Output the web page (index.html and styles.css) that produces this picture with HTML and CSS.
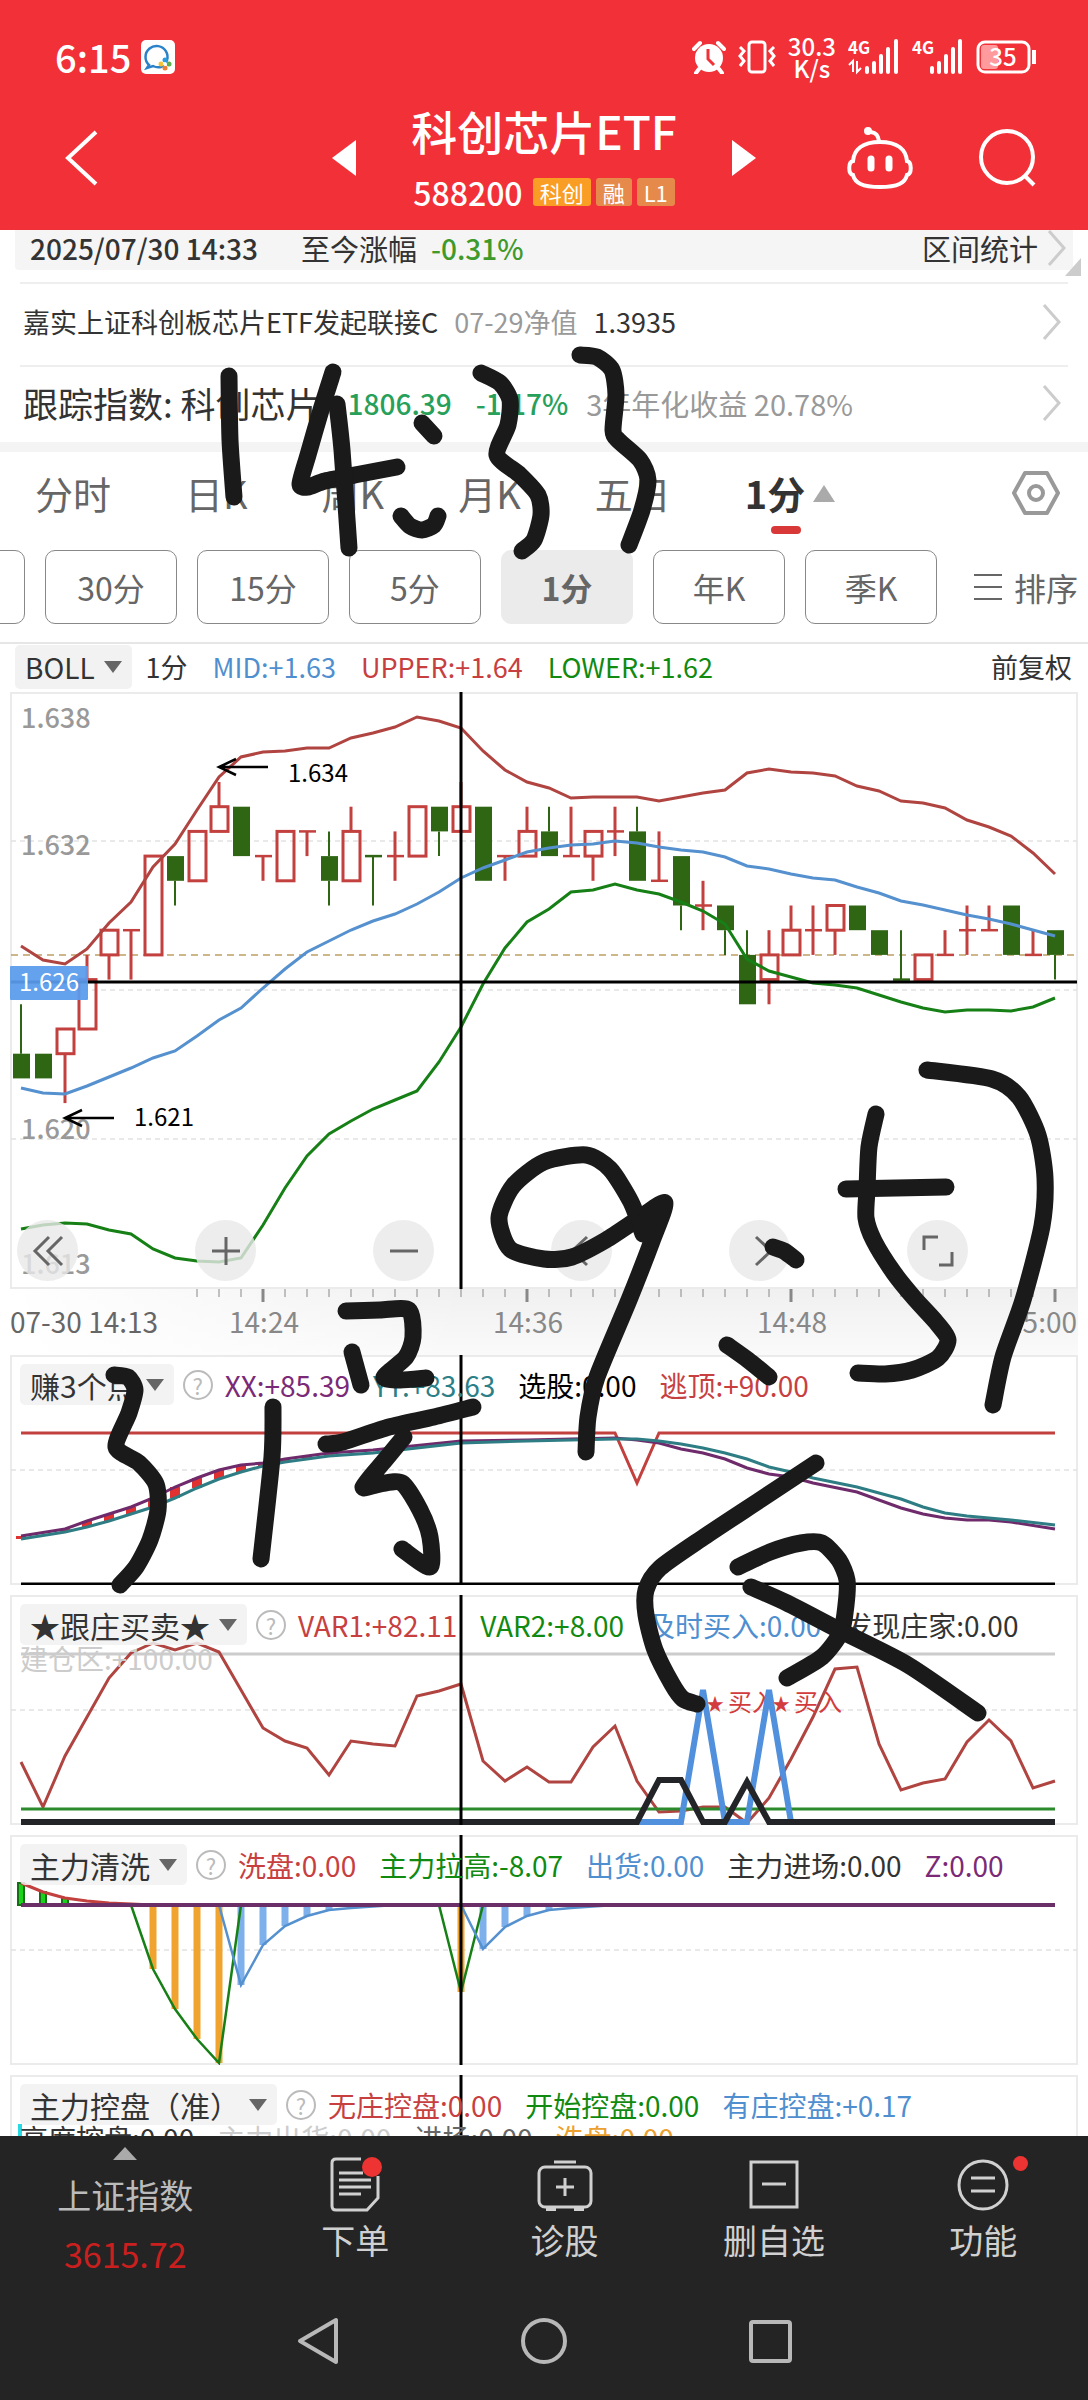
FILE: index.html
```html
<!DOCTYPE html>
<html lang="zh-CN">
<head>
<meta charset="utf-8">
<meta name="viewport" content="width=device-width, initial-scale=1">
<title>科创芯片ETF 588200</title>
<link rel="stylesheet" href="styles.css">
</head>
<body>
<div class="page">

<header class="top">
  <div class="status">
    <span class="clock">6:15</span>
    <svg class="app-badge" width="34" height="34" viewBox="0 0 34 34"><rect width="34" height="34" rx="5" fill="#fff"/><path d="M8 25a11 11 0 1 1 12 2c-4 1-6 0-8-1l-6 2z" fill="none" stroke="#2b82c9" stroke-width="2.5"/><circle cx="24" cy="20" r="2.5" fill="#2b9be0"/><circle cx="20" cy="24" r="2.5" fill="#f5c33b"/><circle cx="28" cy="24" r="2.5" fill="#59b04c"/><circle cx="24" cy="28" r="2.5" fill="#ef7f35"/><circle cx="24" cy="24" r="2" fill="#fff"/></svg>
    <div class="status-right">
      <svg width="34" height="34" viewBox="0 0 34 34"><circle cx="17" cy="18" r="14" fill="#fff"/><path d="M16 9v10l6 6" fill="none" stroke="#f23037" stroke-width="3"/><path d="M2 9l6-6M32 9l-6-6M7 29l-3 4M27 29l3 4" stroke="#fff" stroke-width="4" stroke-linecap="round"/></svg>
      <svg width="38" height="34" viewBox="0 0 38 34"><rect x="11" y="2" width="16" height="30" rx="3" fill="none" stroke="#fff" stroke-width="3"/><path d="M2 7l4 4-4 5 4 5-4 5M36 7l-4 4 4 5-4 5 4 5" fill="none" stroke="#fff" stroke-width="3"/></svg>
      <span class="speed">30.3<br>K/s</span>
      <svg width="52" height="36" viewBox="0 0 52 36"><text class="net" x="0" y="15">4G</text><path d="M5 33V22l-4 4M9 22v11l4-4" fill="none" stroke="#fff" stroke-width="2"/><path d="M19 33v-4M26 33v-9M33 33V17M40 33V10M48 33V2" stroke="#fff" stroke-width="4" stroke-linecap="round"/></svg>
      <svg width="52" height="36" viewBox="0 0 52 36"><text class="net" x="0" y="15">4G</text><path d="M20 33v-4M27 33v-9M34 33V17M41 33V10M48 33V2" stroke="#fff" stroke-width="4" stroke-linecap="round"/></svg>
      <svg width="62" height="34" viewBox="0 0 62 34"><rect x="5" y="5" width="17" height="24" rx="3" fill="#ff9a9d"/><rect x="2" y="2" width="51" height="30" rx="7" fill="none" stroke="#fff" stroke-width="3"/><path d="M58 10v14" stroke="#fff" stroke-width="4"/><text x="27" y="26" class="battery">35</text></svg>
    </div>
  </div>
  <nav class="titlebar">
    <button class="icon-btn back" aria-label="返回"><svg width="34" height="56" viewBox="0 0 34 56"><path d="M32 2L4 28l28 26" fill="none" stroke="#fff" stroke-width="4"/></svg></button>
    <button class="icon-btn" aria-label="上一只"><svg width="24" height="36" viewBox="0 0 24 36"><path d="M24 0v36L0 18z" fill="#fff"/></svg></button>
    <div class="title">
      <h1>科创芯片ETF</h1>
      <div class="code"><span>588200</span><i class="tag hot">科创</i><i class="tag">融</i><i class="tag">L1</i></div>
    </div>
    <button class="icon-btn" aria-label="下一只"><svg width="24" height="36" viewBox="0 0 24 36"><path d="M0 0v36l24-18z" fill="#fff"/></svg></button>
    <div class="tools">
      <button class="icon-btn" aria-label="助手"><svg width="68" height="64" viewBox="0 0 68 64" fill="none" stroke="#fff" stroke-width="4"><path d="M34 16C16 16 8 24 7 35c-5 1-5 13 0 14 2 8 9 12 27 12s25-4 27-12c5-1 5-13 0-14C60 24 52 16 34 16z"/><path d="M33 15c-1-6-3-8-8-9" stroke-width="4"/><circle cx="22" cy="5" r="2"/><path d="M25 33v9M43 33v9" stroke-width="7" stroke-linecap="round"/></svg></button>
      <button class="icon-btn" aria-label="搜索"><svg width="60" height="60" viewBox="0 0 60 60" fill="none" stroke="#fff" stroke-width="4"><circle cx="29" cy="29" r="26"/><path d="M47 48l9 9"/></svg></button>
    </div>
  </nav>
</header>

<section class="info">
  <div class="range">
    <span class="num">2025/07/30 14:33</span><span class="range-label">至今涨幅</span><span class="num down">-0.31%</span>
    <a href="#range" class="range-link">区间统计<svg class="chev" width="20" height="36" viewBox="0 0 20 36"><path d="M2 1l15 17L2 35"/></svg></a>
  </div>
  <a href="#fund" class="info-row fund"><span>嘉实上证科创板芯片ETF发起联接C</span><span class="muted">07-29净值</span><span>1.3935</span><svg class="chev" width="20" height="36" viewBox="0 0 20 36"><path d="M2 1l15 17L2 35"/></svg></a>
  <a href="#index" class="info-row index"><span class="index-name">跟踪指数: 科创芯片</span><span class="green">1806.39</span><span class="green">-1.17%</span><span class="muted yield">3年年化收益 20.78%</span><svg class="chev" width="20" height="36" viewBox="0 0 20 36"><path d="M2 1l15 17L2 35"/></svg></a>
</section>

<nav class="tabs">
  <button>分时</button><button>日K</button><button>周K</button><button>月K</button><button>五日</button><button class="on">1分<i class="up"></i></button>
  <button class="gear" aria-label="设置"><svg width="48" height="44" viewBox="0 0 48 44" fill="none" stroke="#999" stroke-width="4"><path d="M13 2h22l11 20-11 20H13L2 22z" stroke-linejoin="round"/><circle cx="24" cy="22" r="7"/></svg></button>
</nav>

<div class="periods">
  <div class="period-list"><button>60分</button><button>30分</button><button>15分</button><button>5分</button><button class="on">1分</button><button>年K</button><button>季K</button></div>
  <button class="sort"><svg width="28" height="28" viewBox="0 0 28 28"><path d="M0 2h28M0 14h28M0 26h28" stroke="#666" stroke-width="2"/></svg>排序</button>
</div>

<main>
  <div class="boll">
    <button class="pick">BOLL<i class="caret"></i></button><span>1分</span><span class="blue">MID:+1.63</span><span class="red">UPPER:+1.64</span><span class="lime">LOWER:+1.62</span><span class="adjust">前复权</span>
  </div>

  <section class="panel">
    <svg id="kline" viewBox="0 690 1088 665"></svg>
    <div class="chart-tools">
      <button aria-label="最早"><svg width="34" height="34" viewBox="0 0 34 34"><path d="M18 3L4 17l14 14M31 3L17 17l14 14"/></svg></button>
      <button aria-label="放大"><svg width="34" height="34" viewBox="0 0 34 34"><path d="M3 17h28M17 3v28"/></svg></button>
      <button aria-label="缩小"><svg width="34" height="34" viewBox="0 0 34 34"><path d="M3 17h28"/></svg></button>
      <button aria-label="左移"><svg width="34" height="34" viewBox="0 0 34 34"><path d="M22 3L7 17l15 14"/></svg></button>
      <button aria-label="右移"><svg width="34" height="34" viewBox="0 0 34 34"><path d="M13 3l15 14-15 14"/></svg></button>
      <button aria-label="全屏"><svg width="34" height="34" viewBox="0 0 34 34"><path d="M3 16V3h14M31 18v13H18"/></svg></button>
    </div>
  </section>

  <section class="panel">
    <svg id="profit" viewBox="0 1355 1088 230"></svg>
    <div class="legend"><button class="pick">赚3个点<i class="caret"></i></button><button class="help" aria-label="说明">?</button><span class="purple">XX:+85.39</span><span class="teal">YY:+83.63</span><span class="black">选股:0.00</span><span class="red">逃顶:+90.00</span></div>
  </section>

  <section class="panel">
    <svg id="follow" viewBox="0 1595 1088 230"></svg>
    <div class="legend"><button class="pick">★跟庄买卖★<i class="caret"></i></button><button class="help" aria-label="说明">?</button><span class="red">VAR1:+82.11</span><span class="lime">VAR2:+8.00</span><span class="blue">及时买入:0.00</span><span>发现庄家:0.00</span><span class="second pale">建仓区:+100.00</span></div>
  </section>

  <section class="panel">
    <svg id="wash" viewBox="0 1835 1088 230"></svg>
    <div class="legend"><button class="pick">主力清洗<i class="caret"></i></button><button class="help" aria-label="说明">?</button><span class="red">洗盘:0.00</span><span class="lime">主力拉高:-8.07</span><span class="blue">出货:0.00</span><span>主力进场:0.00</span><span class="purple">Z:0.00</span></div>
  </section>

  <section class="panel cut">
    <svg id="control" viewBox="0 2075 1088 230"></svg>
    <div class="legend"><button class="pick">主力控盘（准）<i class="caret"></i></button><button class="help" aria-label="说明">?</button><span class="red">无庄控盘:0.00</span><span class="lime">开始控盘:0.00</span><span class="blue">有庄控盘:+0.17</span>
      <div class="second"><span>高度控盘:0.00</span><span class="pale">主力出货:0.00</span><span class="gray">进场:0.00</span><span class="amber">洗盘:0.00</span></div></div>
  </section>
</main>

<footer class="bottom">
  <nav class="actions">
    <button class="market"><i class="up"></i><span>上证指数</span><span class="quote">3615.72</span></button>
    <button><svg width="56" height="56" viewBox="0 0 56 56"><path d="M34 3H9q-4 0-4 4v43q0 4 4 4h31l11-12V20" /><path d="M12 17h24M12 24h32M12 31h32M12 38h22"/><circle cx="45" cy="11" r="10" fill="#e33" stroke="none"/></svg>下单</button>
    <button><svg width="56" height="56" viewBox="0 0 56 56"><rect x="2" y="11" width="52" height="40" rx="6"/><path d="M17 6h22M28 22v18M19 31h18"/><path d="M9 53h10M37 53h10" stroke-width="4"/></svg>诊股</button>
    <button><svg width="56" height="56" viewBox="0 0 56 56"><rect x="5" y="6" width="46" height="45"/><path d="M16 28h24"/></svg>删自选</button>
    <button><svg width="56" height="56" viewBox="0 0 56 56"><circle cx="28" cy="29" r="24"/><path d="M16 22h24M16 35h24"/></svg>功能<i class="dot"></i></button>
  </nav>
  <nav class="system">
    <button class="icon-btn" aria-label="返回"><svg width="48" height="52" viewBox="0 0 48 52"><path d="M42 5v42L6 26z"/></svg></button>
    <button class="icon-btn" aria-label="主页"><svg width="48" height="52" viewBox="0 0 48 52"><circle cx="24" cy="26" r="21"/></svg></button>
    <button class="icon-btn" aria-label="最近"><svg width="48" height="52" viewBox="0 0 48 52"><rect x="5" y="7" width="39" height="39" rx="2"/></svg></button>
  </nav>
</footer>

<svg id="ink" class="ink" viewBox="0 0 1088 2400" preserveAspectRatio="xMidYMin meet"></svg>
</div>
<script src="charts.js"></script>
</body>
</html>
```
FILE: styles.css
```css
* { box-sizing: border-box; }
body { margin: 0; background: #fff; color: #333; font-family: "Noto Sans CJK SC", "Noto Sans", sans-serif; font-size: 28px; line-height: 40px; }
button { border: 0; padding: 0; background: none; font: inherit; color: inherit; white-space: nowrap; }
a { color: inherit; text-decoration: none; }
i { font-style: normal; }
svg { display: block; flex: none; }
.page { position: relative; overflow: hidden; white-space: nowrap; }
.icon-btn { display: flex; }

/* header */
.top { background: #f23037; color: #fff; height: 230px; padding-top: 34px; }
.status { display: flex; align-items: center; height: 46px; padding: 0 50px 0 55px; gap: 10px; }
.clock { font-size: 38px; font-weight: 500; line-height: 46px; }
.status-right { margin-left: auto; display: flex; align-items: center; gap: 12px; }
.speed { font-size: 24px; line-height: 22px; font-weight: 500; text-align: center; }
.net { font-size: 17px; font-weight: 700; fill: #fff; }
.battery { font-size: 24px; font-weight: 500; fill: #fff; text-anchor: middle; }
.titlebar { display: grid; grid-template-columns: 1fr 24px 376px 24px 1fr; align-items: center; padding-top: 20px; }
.back { padding-left: 64px; }
.title { display: flex; flex-direction: column; align-items: center; }
.title h1 { margin: 0; font-size: 46px; line-height: 60px; font-weight: 500; }
.code { display: flex; align-items: center; gap: 5px; font-size: 32px; line-height: 48px; padding-top: 8px; }
.code span { padding-right: 5px; font-weight: 500; }
.tag { font-size: 22px; line-height: 28px; padding: 0 7px; background: #e58a4b; border-radius: 3px; }
.tag.hot { background: #f99d24; }
.tools { display: flex; justify-content: flex-end; align-items: center; gap: 64px; padding-right: 50px; }

/* quotes under the header */
.chev { fill: none; stroke: #ccc; stroke-width: 3; margin-left: auto; }
.range { position: relative; display: flex; align-items: center; margin: 0 15px; padding: 0 6px 4px 15px; height: 40px; background: #f5f5f5; border-radius: 0 0 4px 4px; }
.range::after { content: ""; position: absolute; right: -8px; bottom: -6px; border-left: 16px solid transparent; border-bottom: 18px solid #ccc; }
.range-label { font-size: 29px; padding: 0 14px 0 43px; }
.range-link { margin-left: auto; display: flex; align-items: center; gap: 9px; font-size: 29px; }
.num { font-weight: 500; }
.down { color: #3f9a2b; }
.green { color: #27a05a; font-weight: 500; }
.muted { color: #999; }
.info-row { display: flex; align-items: center; margin: 0 20px; padding: 0 6px 3px 3px; border-top: 2px solid #eee; height: 83px; }
.fund { margin-top: 12px; font-size: 27px; gap: 16px; padding-bottom: 6px; }
.index { height: 77px; gap: 24px; }
.index-name { font-size: 35px; margin-right: 3px; }
.yield { font-size: 29px; margin-left: -6px; }

/* tabs */
.tabs { display: flex; align-items: center; gap: 74px; height: 108px; padding: 0 28px 16px 35px; border-top: 10px solid #f4f4f4; font-size: 38px; color: #666; }
.tabs button { line-height: 82px; }
.tabs .on { position: relative; display: flex; align-items: center; gap: 8px; color: #333; font-weight: 700; }
.tabs .on::after { content: ""; position: absolute; left: 26px; bottom: 0; width: 30px; height: 8px; border-radius: 4px; background: #d93838; }
.tabs .gear { margin-left: auto; }
.up { border: 11px solid transparent; border-top: 0; border-bottom: 17px solid #aaa; }
.periods { display: flex; align-items: center; justify-content: space-between; padding-right: 10px; font-size: 32px; color: #666; height: 74px; }
.period-list { display: flex; gap: 20px; margin-left: -107px; }
.period-list button { width: 132px; height: 74px; border: 1px solid #888; border-radius: 10px; }
.period-list .on { background: #ebebeb; border-color: #ebebeb; font-weight: 700; }
.sort { display: flex; align-items: center; gap: 12px; }

/* charts */
.boll { display: flex; align-items: center; gap: 25px; height: 48px; margin-top: 18px; padding: 0 16px 0 15px; border-top: 2px solid #e6e6e6; font-size: 27px; }
.boll .pick { font-size: 28px; height: 44px; margin-right: -11px; background: #f2f2f2; }
.adjust { margin-left: auto; }
.pick { display: flex; align-items: center; gap: 9px; height: 41px; padding: 0 10px; font-size: 30px; background: #f1f1f1d9; border-radius: 5px; }
.caret { border: 9px solid transparent; border-bottom: 0; border-top: 12px solid #666; }
.panel { display: grid; margin-bottom: 10px; }
.panel:first-of-type { margin-bottom: 0; }
.panel > * { grid-area: 1 / 1; min-width: 0; }
.panel > svg { width: 100%; height: auto; }
.cut { height: 61px; overflow: hidden; margin-bottom: 0; }
.legend { position: relative; align-self: start; display: flex; flex-wrap: wrap; align-items: center; column-gap: 23px; padding: 9px 0 0 20px; }
.legend .pick { margin-right: -14px; }
.help { width: 30px; height: 30px; border: 2px solid #bbb; border-radius: 50%; color: #bbb; font-size: 22px; line-height: 24px; margin-right: -11px; }
.second { flex-basis: 100%; line-height: 26px; display: flex; gap: 23px; }
.chart-tools { align-self: start; display: flex; justify-content: space-between; padding: 530px 120px 0 17px; }
.chart-tools button { width: 61px; height: 61px; border-radius: 50%; background: #e8e8e8cc; display: grid; place-items: center; }
.chart-tools path { fill: none; stroke: #666; stroke-width: 3; }
.blue { color: #4f8fd0; } .red { color: #c7403f; } .lime { color: #108a10; } .purple { color: #7b2a77; } .teal { color: #2b8087; }
.black { color: #000; } .pale { color: #ccc; } .gray { color: #666; } .amber { color: #eba02f; }
.axis { font-size: 27px; font-weight: 500; fill: #999; }
.time { font-size: 28px; fill: #888; }
.mark { font-size: 24px; fill: #000; }
.buy { font-size: 24px; fill: #d23c3c; }
.star { font-size: 18px; }

/* bottom bars */
.bottom { background: #242424; color: #d0d0d0; height: 264px; }
.actions { display: grid; grid-template-columns: 250fr repeat(4, 209fr); height: 154px; font-size: 34px; line-height: 48px; }
.actions button { position: relative; display: flex; flex-direction: column; align-items: center; padding-top: 20px; gap: 4px; }
.actions svg { fill: none; stroke: #d0d0d0; stroke-width: 3; }
.actions .market { padding-top: 11px; gap: 11px; color: #bbb; }
.market .up { border-width: 0 12px 13px; }
.quote { color: #c9201f; }
.dot { position: absolute; right: 60px; top: 20px; width: 15px; height: 15px; border-radius: 50%; background: #e33; }
.system { display: flex; justify-content: center; gap: 178px; padding-top: 25px; }
.system svg { fill: none; stroke: #b8b8b8; stroke-width: 4; stroke-linejoin: round; }

/* handwriting over the page */
.ink { position: absolute; inset: 0; width: 100%; height: 100%; pointer-events: none; fill: none; stroke: #1a1a1a; stroke-width: 17; stroke-linecap: round; stroke-linejoin: round; }
```
FILE: charts.js
```js
const RED = '#c2403e', GREEN = '#2f6614', LIME = '#168016', BLUE = '#5590cf', PURPLE = '#6f2a6b', TEAL = '#2f7d84';
const X = i => 21 + 22 * i;
const rect = (x, y, w, h, fill, extra = '') => `<rect x="${x}" y="${y}" width="${w}" height="${h}" fill="${fill}" ${extra}/>`;
const line = (x1, y1, x2, y2, color, w, extra = '') => `<line x1="${x1}" y1="${y1}" x2="${x2}" y2="${y2}" stroke="${color}" stroke-width="${w}" ${extra}/>`;
const poly = (pts, color, w) => `<polyline points="${pts.map(p => p.join()).join(' ')}" fill="none" stroke="${color}" stroke-width="${w}"/>`;
const series = (ys, color, w) => poly(ys.map((y, i) => [X(i), y]), color, w);
// [index, y] pairs
const sparse = (pairs, color, w) => poly(pairs.map(([i, y]) => [X(i), y]), color, w);
const text = (x, y, s, cls, extra = '') => `<text x="${x}" y="${y}" class="${cls}" ${extra}>${s}</text>`;
const draw = (id, s) => { document.getElementById(id).innerHTML = s; };
const frame = (y, h) => rect(11, y + 1, 1066, h - 2, 'none', 'stroke="#ebebeb" stroke-width="2"');
const dashed = (y, color = '#e2e2e2', d = '5 4') => line(11, y, 1077, y, color, 1.5, `stroke-dasharray="${d}"`);
const cross = (y1, y2) => line(461, y1, 461, y2, '#000', 3);

// candles: kind, body top, body bottom, high, low (in ticks below 1.634)
const candles = [
  'g 11 12 9 12','g 11 12 11 12','r 10 11 10 13','r 8 10 7 10','r 6 7 6 8','r 6 6 6 8','r 3 7 3 7','g 3 4 3 5','r 2 4 2 4','r 1 2 0 2','g 1 3 1 3','r 3 3 3 4',
  'r 2 4 2 4','r 2 2 2 3','g 3 4 2 5','r 2 4 1 4','g 3 3 3 5','r 3 3 2 4','r 1 3 1 3','g 1 2 1 3','r 1 2 0 2','g 1 4 1 4','r 3 3 3 4','r 2 3 1 3',
  'g 2 3 1 3','r 3 3 1 3','r 2 3 2 4','r 2 2 1 3','g 2 4 1 4','r 4 4 2 4','g 3 5 3 6','r 5 5 4 6','g 5 6 5 7','g 7 9 6 9','r 7 8 6 9','r 6 7 5 7',
  'r 6 6 5 7','r 5 6 5 7','g 5 6 5 6','g 6 7 6 7','g 8 8 6 8','r 7 8 7 8','r 7 7 6 7','r 6 6 5 7','r 6 6 5 6','g 5 7 5 7','r 7 7 6 7','g 6 7 6 8'];
const L = k => 782 + 24.7 * k;
const candle = (s, i) => {
  const [kind, ...v] = s.split(' ');
  const [t, b, h, l] = v.map(n => L(+n)), x = X(i), c = kind === 'r' ? RED : GREEN, w = kind === 'r' ? 3 : 2;
  const wick = (h < t ? line(x, h, x, t, c, w) : '') + (l > b ? line(x, b, x, l, c, w) : '');
  if (t === b) return wick + line(x - 8, t, x + 9, t, c, 2.5);
  return wick + (kind === 'g' ? rect(x - 8, t, 17, b - t, c) : rect(x - 8, t, 17, b - t, 'none', `stroke="${c}" stroke-width="3"`));
};
const upper = [946,960,964,949,923,902,867,844,810,777,757,752,751,748,748,738,733,727,717,721,728,751,770,782,788,798,797,797,797,801,797,793,790,773,769,772,773,776,786,791,801,803,808,820,827,836,853,874];
const mid = [1088,1093,1094,1086,1077,1068,1058,1051,1036,1020,1008,988,969,952,941,930,921,914,904,892,878,868,860,852,848,845,844,841,843,847,850,852,857,866,869,874,878,880,887,893,901,905,910,915,919,924,930,936];
const lower = [1229,1225,1223,1224,1230,1234,1249,1258,1261,1262,1258,1225,1188,1156,1134,1121,1109,1100,1091,1062,1027,984,948,922,909,892,890,884,890,894,902,911,924,959,971,977,983,985,988,995,1002,1008,1012,1010,1010,1011,1007,998];

let k = '<defs><linearGradient id="fade" x1="0" x2="0" y1="0" y2="1"><stop offset="0" stop-color="#f0f0f0"/><stop offset="1" stop-color="#fafafa"/></linearGradient><linearGradient id="fadeL"><stop offset="0" stop-color="#fff"/><stop offset="1" stop-color="#fff" stop-opacity="0"/></linearGradient></defs>';
k += rect(10, 1289, 1068, 66, 'url(#fade)') + rect(10, 1289, 460, 66, 'url(#fadeL)') + frame(692, 597);
k += dashed(841) + dashed(990) + dashed(1139);
k += line(11, 955, 1077, 955, '#bf9f66', 1.5, 'stroke-dasharray="7 5"');
k += text(21, 728, '1.638', 'axis') + text(21, 855, '1.632', 'axis') + text(21, 1139, '1.620', 'axis') + text(21, 1274, '1.613', 'axis');
k += candles.map(candle).join('') + series(upper, '#b04440', 3) + series(mid, BLUE, 3) + series(lower, LIME, 3);
k += line(11, 982, 1077, 982, '#000', 3) + cross(692, 1289);
k += rect(10, 966, 78, 34, '#5a9bedee', 'rx="1"') + text(19, 991, '1.626', 'mark', 'style="fill:#fff"');
const arrow = (x, y) => `<path d="M${x + 49} ${y}H${x}M${x + 17} ${y - 8}L${x} ${y}l17 8" fill="none" stroke="#000" stroke-width="2.5"/>`;
k += arrow(219, 767) + text(288, 782, '1.634', 'mark') + arrow(65, 1118) + text(134, 1126, '1.621', 'mark');
for (let i = 8; i < 48; i++) {
  const major = i % 12 === 11;
  k += line(X(i), 1289, X(i), major ? 1302 : 1297, '#888', major ? 3 : 1);
}
k += text(10, 1333, '07-30 14:13', 'time', 'style="fill:#666"') + text(264, 1333, '14:24', 'time', 'text-anchor="middle"') + text(528, 1333, '14:36', 'time', 'text-anchor="middle"') + text(792, 1333, '14:48', 'time', 'text-anchor="middle"') + text(1077, 1333, '15:00', 'time', 'text-anchor="end"');
draw('kline', k);

const xx = [[0,1536],[2,1529],[3,1521],[4,1514],[5,1507],[6,1498],[7,1487],[8,1478],[9,1470],[10,1465],[11,1463],[12,1459],[13,1456],[14,1453],[16,1450],[20,1441],[23,1440],[27,1438],[28,1440],[29,1443],[30,1449],[31,1453],[32,1459],[33,1468],[34,1474],[35,1477],[36,1483],[38,1492],[40,1508],[41,1514],[42,1518],[43,1520],[44,1520],[45,1522],[47,1529]];
const yy = [[0,1539],[2,1532],[3,1527],[4,1521],[5,1514],[6,1507],[7,1498],[8,1488],[9,1479],[10,1472],[11,1466],[12,1462],[13,1459],[14,1456],[16,1453],[20,1443],[23,1441],[27,1439],[28,1439],[29,1441],[30,1444],[31,1448],[32,1453],[33,1459],[34,1467],[35,1472],[36,1478],[38,1487],[40,1499],[41,1507],[42,1513],[43,1516],[44,1518],[45,1520],[47,1525]];
let p = frame(1355, 230) + dashed(1470);
p += xx.slice(0, 14).map(([i, y], n) => rect(X(i) - 5, y, 10, yy[n][1] - y, '#e03030')).join('');
p += sparse([[0,1433],[27,1433],[28,1483],[29,1433],[47,1433]], RED, 3) + sparse(xx, PURPLE, 3) + sparse(yy, TEAL, 3);
p += line(21, 1584, 1055, 1584, '#000', 3) + cross(1355, 1585);
draw('profit', p);

const var1 = [1762,1807,1756,1717,1678,1653,1643,1650,1643,1652,1690,1728,1741,1748,1775,1741,1744,1746,1696,1691,1684,1761,1781,1767,1782,1782,1747,1726,1781,1812,1811,1807,1807,1823,1798,1759,1717,1669,1667,1744,1790,1783,1779,1742,1720,1741,1788,1781];
let f = frame(1595, 230) + dashed(1710) + line(21, 1654, 1055, 1654, '#ccc', 3);
f += series(var1, '#b04440', 3) + line(21, 1809, 1055, 1809, '#2b8a2b', 3);
f += text(706, 1711, '★', 'buy star') + text(728, 1711, '买入', 'buy') + text(772, 1711, '★', 'buy star') + text(794, 1711, '买入', 'buy');
f += sparse([[28,1822],[30,1822],[31,1690],[32,1822],[33,1822],[34,1690],[35,1822]], '#5190dd', 6);
f += sparse([[0,1822],[28,1822],[29,1780],[30,1780],[31,1822],[32,1822],[33,1782],[34,1822],[47,1822]], '#222428', 6) + cross(1595, 1825);
draw('follow', f);

let w = frame(1835, 230) + dashed(1950);
const drop = (pairs, c) => pairs.map(([i, y]) => rect(X(i) - 3.5, 1905, 7, y - 1905, c)).join('');
const rise1 = [[6,1969],[7,2009],[8,2039],[9,2063]], sell1 = [[10,1985],[11,1945],[12,1926],[13,1916],[14,1910],[15,1908]], sell2 = [[21,1949],[22,1927],[23,1916],[24,1910],[25,1908]];
w += drop([...rise1, [20,1992]], '#f0a42f') + drop([...sell1, ...sell2], '#7eb0ec');
w += [[0,1883],[1,1892],[2,1898]].map(([i, y]) => rect(X(i) - 3, y, 6, 1905 - y, '#19d219', 'stroke="#137013" stroke-width="2"')).join('');
w += sparse([[0,1883],[1,1892],[2,1898],[3,1901],[4,1903],[6,1905]], RED, 3);
w += sparse([[5,1905], ...rise1, [10,1905]], LIME, 2.5) + sparse([[19,1905],[20,1992],[21,1905]], LIME, 2.5);
w += sparse([[9,1905], ...sell1, [17,1905]], BLUE, 2.5) + sparse([[20,1905], ...sell2, [27,1905]], BLUE, 2.5);
w += line(21, 1905, 1055, 1905, '#6b2f68', 4) + cross(1835, 2065);
draw('wash', w);
draw('control', frame(2075, 230) + line(20, 2124, 20, 2300, '#27d9e0', 4) + cross(2075, 2305));

// pen strokes, smoothed through their points
const strokes = [
  '229,376 230,440 234,497', '333,372 321,410 308,455 300,484 308,487 325,481 360,474 397,467', '337,404 342,450 349,548',
  '422,423 434,436', '401,516 410,526 422,530 434,525 438,516',
  '481,373 500,383 510,400 508,425 497,455 520,475 538,495 541,515 534,540 522,551',
  '580,355 597,357 612,370 616,395 613,430 618,440 640,460 648,480 642,510 629,545',
  '643,1234 631,1202 610,1169 586,1155 544,1162 513,1186 499,1218 510,1249 544,1259 572,1257 606,1240 641,1217 665,1203 652,1241 629,1300 597,1377 588,1417 586,1452',
  '640,1222 650,1216 647,1230', '773,1247 784,1251 796,1260', '727,1345 748,1360 769,1377',
  '876,1114 869,1147 867,1190 866,1218 874,1241 894,1273 915,1299 936,1322 948,1340 938,1358 912,1370 885,1374 858,1373', '846,1189 946,1187',
  '927,1070 992,1079 1019,1097 1038,1135 1045,1178 1042,1226 1023,1300 1003,1357 993,1405',
  '114,1375 128,1377 135,1390 129,1413 116,1447 139,1463 156,1484 158,1510 150,1540 136,1567 120,1585', '273,1407 272,1457 261,1559',
  '352,1352 361,1385', '346,1311 380,1310 409,1310 413,1337 406,1357 384,1377 400,1380 426,1378', '326,1444 343,1442 389,1427 434,1417 473,1407',
  '404,1437 385,1460 363,1487 380,1484 402,1483 420,1510 430,1537 430,1567 402,1549',
  '816,1463 760,1500 704,1537 660,1568 646,1590 646,1615 655,1650 672,1684 683,1699 697,1704',
  '738,1567 770,1552 801,1543 822,1543 839,1560 847,1580 846,1605 841,1632 822,1657 787,1678', '751,1587 787,1603 839,1630 908,1665 978,1713'];
const smooth = s => {
  const q = s.split(' ').map(a => a.split(',').map(Number));
  let d = `M${q[0]}`;
  for (let i = 0; i < q.length - 1; i++) {
    const a = q[i - 1] || q[i], b = q[i], c = q[i + 1], e = q[i + 2] || c;
    d += `C${b[0] + (c[0] - a[0]) / 8},${b[1] + (c[1] - a[1]) / 8} ${c[0] - (e[0] - b[0]) / 8},${c[1] - (e[1] - b[1]) / 8} ${c}`;
  }
  return `<path d="${d}"/>`;
};
draw('ink', strokes.map(smooth).join(''));
```
